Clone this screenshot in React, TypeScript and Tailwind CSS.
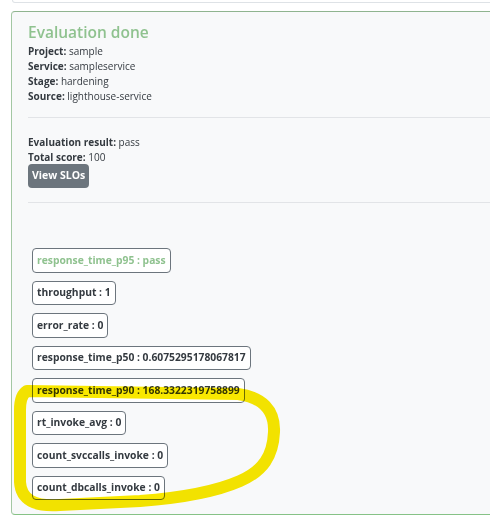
import React from 'react';

const font = { fontFamily: '"Open Sans", "Noto Sans", sans-serif' };

type Slo = { name: string; value: string; pass?: boolean };

const slos: Slo[] = [
    { name: 'response_time_p95', value: 'pass', pass: true },
    { name: 'throughput', value: '1' },
    { name: 'error_rate', value: '0' },
    { name: 'response_time_p50', value: '0.6075295178067817' },
    { name: 'response_time_p90', value: '168.3322319758899' },
    { name: 'rt_invoke_avg', value: '0' },
    { name: 'count_svccalls_invoke', value: '0' },
    { name: 'count_dbcalls_invoke', value: '0' },
];

export default function App() {
    return (
        <div className="relative w-[490px] h-[523px] overflow-hidden bg-white text-[#343a40]" style={font}>
            {/* bottom edge of previous card */}
            <div className="ml-[12px] w-[500px] h-[3px] border border-t-0 border-[#dee2e6] rounded-b-[4px] bg-white" />

            {/* evaluation card */}
            <div className="mt-[8px] ml-[11px] w-[500px] h-[504px] border border-[#a3c7a3] border-t-[#8fb48f] border-b-[#86c286] rounded-[4px] bg-[#f8f9fa] pl-[16px] pt-[9px]">
                <h2 className="text-[15.5px] leading-[22px] font-semibold text-[#8fc28f]">Evaluation done</h2>
                <div className="text-[10px] leading-[15px] mt-[1px]">
                    <Field label="Project" value="sample" />
                    <Field label="Service" value="sampleservice" />
                    <Field label="Stage" value="hardening" />
                    <Field label="Source" value="lighthouse-service" />
                </div>

                <hr className="mt-[13px] border-t border-[#e2e4e7]" />

                <div className="mt-[17px] text-[10px] leading-[15px]">
                    <Field label="Evaluation result" value="pass" />
                    <Field label="Total score" value="100" />
                </div>
                <button className="block mt-[-1px] h-[24px] px-[4px] rounded-[4px] bg-[#6c757d] text-white text-[10.5px] font-bold">
                    View SLOs
                </button>

                <hr className="mt-[14px] border-t border-[#e2e4e7]" />

                <div className="mt-[45px] ml-[4px] flex flex-col items-start gap-[8px]">
                    {slos.map((s) => (
                        <div
                            key={s.name}
                            className={`h-[24.5px] flex items-center px-[4px] rounded-[4px] border border-[#6c757d] bg-white text-[10.3px] font-bold ${s.pass ? 'text-[#8fc28f]' : 'text-[#343a40]'}`}
                        >
                            {s.name} : {s.value}
                        </div>
                    ))}
                </div>
            </div>

            {/* yellow marker annotation */}
            <svg className="absolute left-0 top-0 pointer-events-none mix-blend-multiply" width="490" height="523" viewBox="0 0 490 523">
                <path
                    d="M 27 391 L 238 394 C 262 397 275 410 274 432 C 273 456 263 471 240 481 C 215 492 180 498 140 501 L 60 505 C 35 507 21 500 20 482 L 20 410 C 20 400 22 394 27 391 Z"
                    fill="none"
                    stroke="#f9e800"
                    strokeWidth="12"
                    strokeLinejoin="round"
                />
            </svg>
        </div>
    );
}

function Field({ label, value }: { label: string; value: string }) {
    return (
        <div>
            <span className="font-bold">{label}:</span> {value}
        </div>
    );
}
